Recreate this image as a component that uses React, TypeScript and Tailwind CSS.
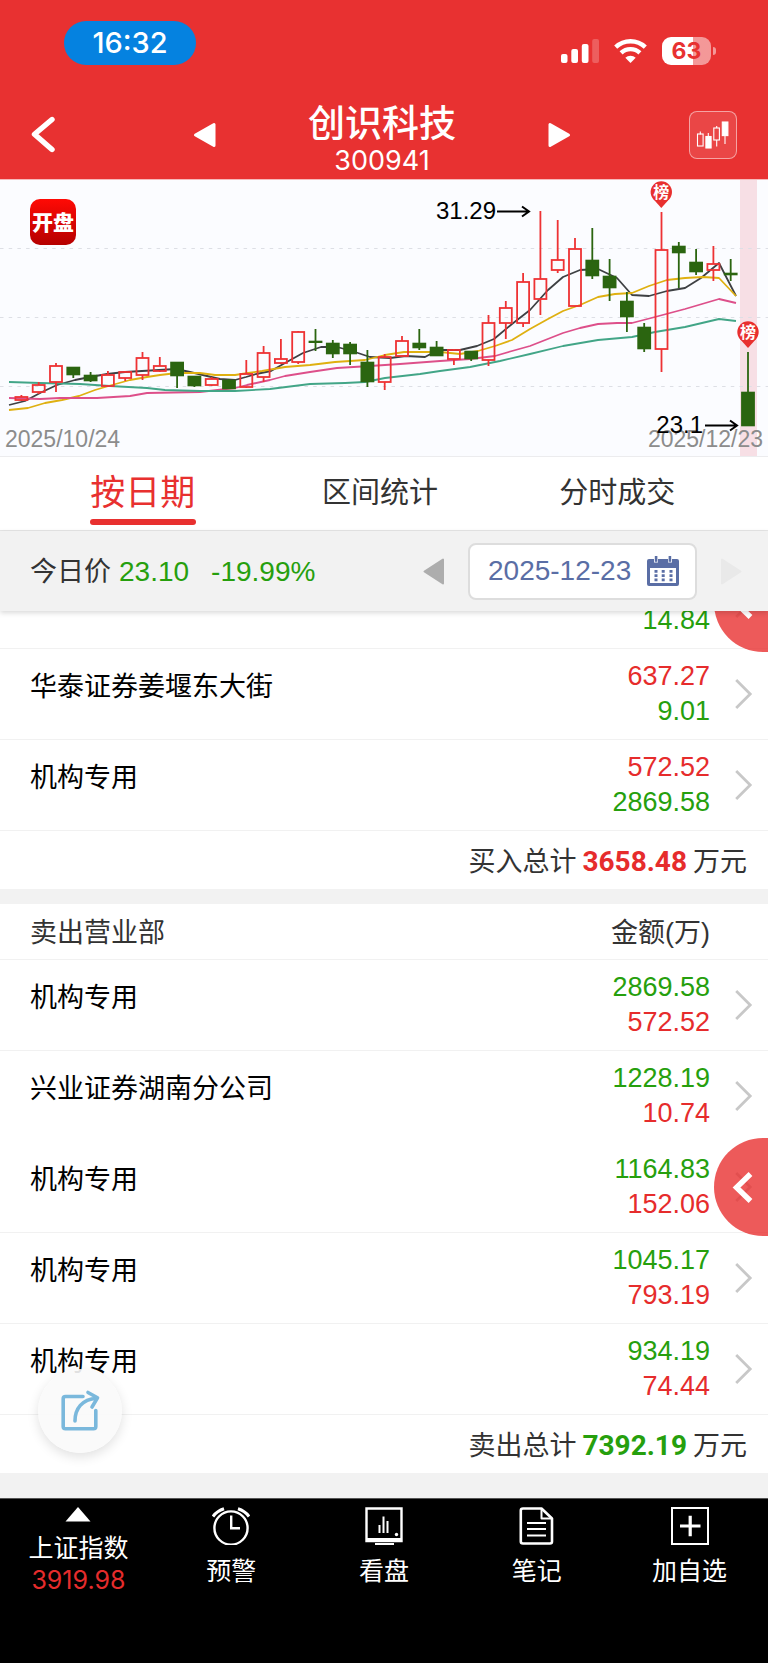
import { useState } from "react";

type Amount = { value: string; up: boolean };
type Row = { name: string; amounts: Amount[]; handle?: boolean; noLine?: boolean };

// [high, body top, body bottom, low, rising]
const candles: [number, number, number, number, boolean][] = [
  [215, 217, 220, 221, true],
  [202, 205, 212, 214, true],
  [183, 186, 202, 212, true],
  [187, 187, 195, 198, false],
  [192, 195, 201, 202, false],
  [191, 195, 206, 207, true],
  [191, 192, 198, 201, true],
  [172, 178, 195, 200, true],
  [177, 186, 191, 192, true],
  [182, 182, 196, 208, false],
  [196, 196, 206, 207, false],
  [197, 199, 205, 206, true],
  [199, 200, 209, 209, false],
  [180, 194, 207, 208, true],
  [166, 173, 197, 202, true],
  [159, 179, 183, 184, true],
  [151, 152, 182, 184, true],
  [149, 161, 162, 171, false],
  [160, 163, 174, 178, false],
  [162, 164, 174, 185, false],
  [170, 182, 202, 207, false],
  [174, 177, 202, 210, true],
  [156, 161, 176, 177, true],
  [149, 163, 168, 170, false],
  [161, 167, 176, 176, false],
  [169, 170, 179, 185, true],
  [171, 171, 179, 181, false],
  [135, 143, 180, 186, true],
  [121, 128, 143, 159, true],
  [93, 102, 143, 147, true],
  [31, 99, 119, 135, true],
  [40, 80, 90, 93, true],
  [58, 69, 126, 127, true],
  [48, 80, 96, 99, false],
  [79, 96, 108, 121, false],
  [112, 121, 137, 152, false],
  [143, 147, 169, 172, false],
  [32, 70, 169, 192, true],
  [62, 66, 73, 108, false],
  [69, 82, 92, 95, false],
  [66, 84, 90, 101, true],
  [79, 93, 95, 101, false],
  [172, 212, 246, 246, false],
];

const averages = [
  {
    color: "#3e4043",
    points:
      "9,225 25,221 42,212 57,205 75,200 90,197 107,194 125,192 142,191 159,190 176,189 190,192 207,196 220,199 235,200 246,197 256,194 271,191 285,183 303,173 321,167 337,167 352,171 370,177 390,178 406,176 425,177 438,170 460,170 477,166 494,159 512,144 530,130 548,110 563,97 580,90 598,89 617,98 632,115 649,116 667,111 685,108 701,98 719,83 736,116",
  },
  {
    color: "#dfb011",
    points:
      "9,230 28,228 45,223 62,220 79,216 95,210 112,205 130,200 147,197 160,195 177,193 200,193 215,195 235,195 248,193 262,191 285,187 310,185 335,182 365,180 385,175 404,172 440,172 460,174 478,171 495,166 512,160 530,149 548,139 563,131 580,125 598,117 615,114 632,113 649,106 667,100 685,98 703,97 719,98 736,116",
  },
  {
    color: "#dd4f8a",
    points:
      "9,218 40,219 60,218 97,218 130,216 147,213 200,212 235,208 247,205 270,200 285,196 310,192 337,188 370,186 400,184 440,181 470,179 495,176 512,171 530,166 563,153 580,148 598,144 617,143 632,143 655,137 685,129 702,124 719,119 736,123",
  },
  {
    color: "#42a587",
    points:
      "9,202 40,203 80,204 110,206 147,208 165,210 200,211 235,211 270,209 310,204 345,203 365,202 385,198 420,194 440,191 470,187 500,181 530,174 563,166 598,160 632,157 655,152 685,147 719,139 736,141",
  },
];

const buyRows: Row[] = [
  { name: "", amounts: [{ value: "\u00a0", up: true }, { value: "14.84", up: false }], handle: true },
  { name: "华泰证券姜堰东大街", amounts: [{ value: "637.27", up: true }, { value: "9.01", up: false }] },
  { name: "机构专用", amounts: [{ value: "572.52", up: true }, { value: "2869.58", up: false }] },
];

const sellRows: Row[] = [
  { name: "机构专用", amounts: [{ value: "2869.58", up: false }, { value: "572.52", up: true }] },
  { name: "兴业证券湖南分公司", amounts: [{ value: "1228.19", up: false }, { value: "10.74", up: true }], noLine: true },
  { name: "机构专用", amounts: [{ value: "1164.83", up: false }, { value: "152.06", up: true }], handle: true },
  { name: "机构专用", amounts: [{ value: "1045.17", up: false }, { value: "793.19", up: true }] },
  { name: "机构专用", amounts: [{ value: "934.19", up: false }, { value: "74.44", up: true }] },
];

const tabs = ["按日期", "区间统计", "分时成交"];

function StatusIcons() {
  return (
    <div className="flex items-end gap-[15px] text-white">
      <svg width="38" height="28" viewBox="0 0 38 28" fill="currentColor">
        <rect x="0" y="17" width="6.5" height="9" rx="2" />
        <rect x="10.3" y="12" width="6.7" height="14" rx="2" />
        <rect x="20.8" y="7" width="6.7" height="19" rx="2" />
        <rect x="31.2" y="2" width="6.8" height="24" rx="2" opacity="0.22" />
      </svg>
      <svg width="33" height="28" viewBox="0 0 33 28" fill="none" stroke="currentColor" strokeWidth="4.4">
        <path d="M1.7 10.2a21.4 21.4 0 0 1 29.6 0" />
        <path d="M7.1 15.9a13.6 13.6 0 0 1 18.8 0" />
        <path d="M16.5 26l-5.2-5.2a7.5 7.5 0 0 1 10.4 0z" fill="currentColor" stroke="none" />
      </svg>
      <div className="flex items-center gap-0.5">
        <div className="flex h-7 w-[49px] items-center justify-center rounded-[9px] bg-linear-to-r from-white from-63% to-white/50 to-63% font-['Inter',sans-serif] text-[23px] font-bold text-[#e83131]">
          63
        </div>
        <div className="h-2 w-[3px] rounded-r-full bg-white/50" />
      </div>
    </div>
  );
}

function Header() {
  return (
    <header className="bg-[#e83131] text-white">
      <div className="flex h-[65px] items-end justify-between pr-[52px] pl-16">
        <div className="flex h-11 w-[132px] items-center justify-center rounded-full bg-[#0582e0] font-['Inter',sans-serif] text-[29px] font-medium">
          16:32
        </div>
        <StatusIcons />
      </div>
      <div className="mt-[26px] flex h-[88px] items-center gap-[92px] pr-[31px] pl-[27px]">
        <div className="flex flex-1 items-center justify-between">
          <button aria-label="返回">
            <svg width="30" height="38" viewBox="0 0 30 38" fill="none" stroke="currentColor" strokeWidth="5.4" strokeLinecap="round" strokeLinejoin="round">
              <path d="M25 3.5L7.5 18.3L25 33.5" />
            </svg>
          </button>
          <button aria-label="上一只">
            <svg width="23" height="26" viewBox="0 0 23 26" fill="currentColor" stroke="currentColor" strokeWidth="3" strokeLinejoin="round">
              <path d="M21 2.5v21L2.5 13z" />
            </svg>
          </button>
        </div>
        <div className="pt-3 text-center">
          <h1 className="text-[37px] leading-10 font-medium">创识科技</h1>
          <p className="font-['Inter',sans-serif] text-[27px] leading-8">300941</p>
        </div>
        <div className="flex flex-1 items-center justify-between">
          <button aria-label="下一只">
            <svg width="23" height="26" viewBox="0 0 23 26" fill="currentColor" stroke="currentColor" strokeWidth="3" strokeLinejoin="round">
              <path d="M2 2.5v21L20.5 13z" />
            </svg>
          </button>
          <button aria-label="K线" className="rounded-lg border border-white/50 bg-white/10">
            <svg width="46" height="46" viewBox="0 0 46 46" fill="none" stroke="currentColor" strokeWidth="1.1">
              <path d="M10.3 19.5v3M18.3 21v4M26.7 14v2M26.7 28v6.5M35 24v8" />
              <rect x="7.5" y="22" width="5.6" height="12" />
              <rect x="15.9" y="24.5" width="5.2" height="11.5" fill="currentColor" />
              <rect x="23.8" y="16" width="5.6" height="12" />
              <rect x="32.3" y="10" width="5.6" height="13.6" fill="currentColor" />
            </svg>
          </button>
        </div>
      </div>
    </header>
  );
}

function Pin({ x, y }: { x: number; y: number }) {
  return (
    <g>
      <circle cx={x} cy={y} r="10.7" fill="#e8302f" />
      <path d={`M${x - 8.5} ${y + 6.5}L${x} ${y + 16}L${x + 8.5} ${y + 6.5}z`} fill="#e8302f" />
      <text x={x} y={y + 6} textAnchor="middle" fontSize="16" fontWeight="700" fill="#fff">
        榜
      </text>
    </g>
  );
}

function Chart() {
  return (
    <svg viewBox="0 0 768 277" className="block w-full border-t border-[#f6b9ba] bg-[#fbfcff]">
      <defs>
        <linearGradient id="badge" x1="0" y1="0" x2="0" y2="1">
          <stop offset="0" stopColor="#ff0a05" />
          <stop offset="1" stopColor="#b50000" />
        </linearGradient>
      </defs>
      <rect x="740" y="0" width="17" height="276" fill="#f7dfe5" />
      {[68.5, 137.5, 206.5].map((y) => (
        <path key={y} d={`M0 ${y}H768`} stroke="#dddfe5" strokeDasharray="3.5 5.2" />
      ))}
      <path d="M0 276.5H768" stroke="#ececee" />
      {averages.map((a) => (
        <polyline key={a.color} points={a.points} fill="none" stroke={a.color} strokeWidth="1.8" strokeLinejoin="round" />
      ))}
      {candles.map(([high, top, bottom, low, rising], i) => {
        const x = 21.4 + i * 17.3;
        const color = rising ? "#ee3234" : "#2b6510";
        const inset = rising ? 0 : 0.6;
        return (
          <g key={i} stroke={color} strokeWidth="1.8">
            <path d={`M${x} ${high}V${top}M${x} ${bottom}V${low}`} />
            <rect
              x={x - 6}
              y={top + inset}
              width="12"
              height={Math.max(bottom - top - inset * 2, 0.5)}
              fill={rising ? "none" : color}
            />
          </g>
        );
      })}
      <Pin x={661.3} y={12} />
      <Pin x={748} y={152} />
      <rect x="30" y="19" width="46" height="46" rx="10" fill="url(#badge)" />
      <text x="53" y="50" textAnchor="middle" fontSize="21" fontWeight="900" fill="#fff">
        开盘
      </text>
      <text x="5" y="267" fontSize="23" fill="#8c8c8c">
        2025/10/24
      </text>
      <text x="763" y="267" textAnchor="end" fontSize="23" fill="#8c8c8c">
        2025/12/23
      </text>
      <text x="496" y="39" textAnchor="end" fontSize="24">
        31.29
      </text>
      <text x="703" y="253" textAnchor="end" fontSize="24">
        23.1
      </text>
      <g fill="none" stroke="#000" strokeWidth="2">
        <path d="M497 31.5H529M522 26.5L529 31.5L522 36.5" />
        <path d="M705 245.5H737M730 240.5L737 245.5L730 250.5" />
      </g>
    </svg>
  );
}

function DateBar() {
  return (
    <div className="relative z-20 flex h-20 items-center justify-between bg-[#f2f2f2] pr-[26px] pl-[30px] shadow-[0_2px_5px_rgba(0,0,0,0.15)]">
      <p className="flex items-center gap-2 pt-0.5 text-[27px] whitespace-nowrap text-[#333]">
        今日价
        <span className="text-[28px] text-[#269f0d]">23.10</span>
        <span className="ml-3.5 text-[28px] text-[#269f0d]">-19.99%</span>
      </p>
      <div className="flex items-center gap-6">
        <button aria-label="前一天" className="text-[#adadad]">
          <svg width="21" height="27" viewBox="0 0 21 27" fill="currentColor" stroke="currentColor" strokeWidth="2" strokeLinejoin="round">
            <path d="M20 1.5v24L1.5 13.5z" />
          </svg>
        </button>
        <button className="flex h-[57px] w-[229px] items-center justify-between rounded-lg border-2 border-[#dddddd] bg-white pr-4 pl-[18px] text-[28px] text-[#5a6ea5]">
          2025-12-23
          <svg width="32" height="30" viewBox="0 0 32 30" fill="currentColor">
            <path fillRule="evenodd" d="M2 3H7V6.5H11V3H21V6.5H25V3H30A2 2 0 0 1 32 5V28A2 2 0 0 1 30 30H2A2 2 0 0 1 0 28V5A2 2 0 0 1 2 3zM3 12V27H29V12z" />
            <rect x="7.8" y="0" width="2.6" height="5.8" />
            <rect x="21.6" y="0" width="2.6" height="5.8" />
            <path d="M9 14V26M16.2 14V26M24 14V26" stroke="currentColor" strokeWidth="3" strokeDasharray="2.7 1.6" />
          </svg>
        </button>
        <button aria-label="后一天" disabled className="text-[#e9e9e9]">
          <svg width="21" height="27" viewBox="0 0 21 27" fill="currentColor" stroke="currentColor" strokeWidth="2" strokeLinejoin="round">
            <path d="M1 1.5v24L19.5 13.5z" />
          </svg>
        </button>
      </div>
    </div>
  );
}

function DealRow({ row }: { row: Row }) {
  const line = row.noLine ? "border-b border-white" : "border-b border-[#f1f1f1]";
  return (
    <tr>
      <td className={`${line} h-[91px] pt-5 pl-[30px] align-top text-[27px] leading-9 text-black`}>{row.name}</td>
      <td className={`${line} text-right text-[27px] leading-[35px]`}>
        {row.amounts.map((a) => (
          <div key={a.value} className={a.up ? "text-[#e62c2c]" : "text-[#269f0d]"}>
            {a.value}
          </div>
        ))}
      </td>
      <td className={`${line} relative w-[58px] pl-6`}>
        <svg width="20" height="32" viewBox="0 0 20 32" fill="none" stroke="#c8c8c8" strokeWidth="2.8">
          <path d="M2.2 2L16.2 16L2.2 30" />
        </svg>
        {row.handle && (
          <button aria-label="展开" className="absolute -top-1 right-0 z-10 h-[98px] w-[54px] overflow-hidden rounded-l-[49px] bg-[#e83131]/80">
            <svg width="54" height="98" viewBox="0 0 54 98" fill="none" stroke="#fff" strokeWidth="5.4">
              <path d="M36.5 36L22.5 49.5L36.5 63" />
            </svg>
          </button>
        )}
      </td>
    </tr>
  );
}

function TotalRow({ label, value, up }: { label: string; value: string; up: boolean }) {
  return (
    <tr>
      <td colSpan={3} className="h-[58px] pt-1 pr-[21px] text-right text-[27px] text-[#333]">
        {label}
        <span className={`mx-1.5 font-['Roboto',sans-serif] text-[28px] font-bold ${up ? "text-[#e62c2c]" : "text-[#269f0d]"}`}>{value}</span>
        万元
      </td>
    </tr>
  );
}

const tableClass = "w-full border-separate border-spacing-0 bg-white";

function BottomNav() {
  const item = "flex flex-1 flex-col items-center";
  const label = "mt-2.5 text-[25px] leading-8";
  return (
    <nav className="flex h-[165px] border-t border-[#555] bg-black px-0.5 pt-2 text-white">
      <button className={item}>
        <svg width="26" height="15" viewBox="0 0 26 15" fill="currentColor">
          <path d="M13 0L25.5 14.5H0.5z" />
        </svg>
        <span className={label}>上证指数</span>
        <span className="font-['Inter',sans-serif] text-[25px] leading-8 text-[#e62c2c]">3919.98</span>
      </button>
      <button className={item}>
        <svg width="38" height="38" viewBox="0 0 38 38" fill="none" stroke="currentColor" strokeWidth="2.4">
          <circle cx="19" cy="21" r="16.6" />
          <path d="M19.2 8.5V21.2H28" />
          <path d="M1 9.5Q5 4 12 1.8M37 9.5Q33 4 26 1.8" strokeWidth="3" />
        </svg>
        <span className={label}>预警</span>
      </button>
      <button className={item}>
        <svg width="38" height="38" viewBox="0 0 38 38" fill="none" stroke="currentColor" strokeWidth="2.4">
          <path d="M1.5 1.5H36.5V34H1.5z" />
          <path d="M1.5 32.5H36.5" strokeWidth="3" />
          <path d="M10 37H29" strokeWidth="2" />
          <path d="M14.5 18V26M18.500 9.500V26M22.500 14V26" strokeWidth="2" />
          <circle cx="31.5" cy="27.5" r="1.7" fill="currentColor" stroke="none" />
        </svg>
        <span className={label}>看盘</span>
      </button>
      <button className={item}>
        <svg width="35" height="38" viewBox="0 0 35 38" fill="none" stroke="currentColor" strokeWidth="2.6" strokeLinejoin="round">
          <path d="M4 1.5H22.5L33 11.5V34.5Q33 36.5 31 36.5H4Q1.8 36.5 1.8 34.5V3.5Q1.8 1.5 4 1.5z" />
          <path d="M22.5 2V11.5H32.5" strokeWidth="2" />
          <path d="M8 16H27M8 22H27M8 28.5H27" strokeWidth="2" />
        </svg>
        <span className={label}>笔记</span>
      </button>
      <button className={item}>
        <svg width="38" height="38" viewBox="0 0 38 38" fill="none" stroke="currentColor">
          <rect x="1" y="1" width="36" height="36" strokeWidth="2" />
          <path d="M9 19H29.5M19.2 8.7V29.3" strokeWidth="3.2" />
        </svg>
        <span className={label}>加自选</span>
      </button>
    </nav>
  );
}

export default function App() {
  const [active, setActive] = useState(0);

  return (
    <div className="flex min-h-screen flex-col bg-[#f2f2f2] font-['Liberation_Sans','Noto_Sans_CJK_SC',sans-serif]">
      <Header />
      <Chart />

      <div className="flex h-[74px] border-b border-[#e6e6e6] bg-white pr-8 pl-6">
        {tabs.map((t, i) => (
          <button
            key={t}
            onClick={() => setActive(i)}
            className={`flex flex-1 flex-col items-center pt-[13px] ${i === active ? "text-[35px] text-[#e8302f]" : "text-[29px] text-[#333]"}`}
          >
            <span className="leading-[46px]">{t}</span>
            {i === active && <span className="mt-[3px] h-1.5 w-[106px] rounded-full bg-[#e8302f]" />}
          </button>
        ))}
      </div>
      <DateBar />

      <main className="flex-1">
        {/* list is scrolled part of the way into its first row */}
        <section className="overflow-hidden">
          <table className={`${tableClass} -mt-[53px]`}>
            <tbody>
              {buyRows.map((row, i) => (
                <DealRow key={i} row={row} />
              ))}
            </tbody>
            <tfoot>
              <TotalRow label="买入总计" value="3658.48" up />
            </tfoot>
          </table>
        </section>

        <section className="relative mt-[15px] mb-[25px]">
          <table className={tableClass}>
            <thead>
              <tr className="text-[27px] text-[#333]">
                <th className="h-14 border-b border-[#f1f1f1] pt-1 pl-[30px] text-left font-normal">卖出营业部</th>
                <th className="border-b border-[#f1f1f1] pt-1 text-right font-normal">金额(万)</th>
                <th className="border-b border-[#f1f1f1]" />
              </tr>
            </thead>
            <tbody>
              {sellRows.map((row, i) => (
                <DealRow key={i} row={row} />
              ))}
            </tbody>
            <tfoot>
              <TotalRow label="卖出总计" value="7392.19" up={false} />
            </tfoot>
          </table>
          <button
            aria-label="分享"
            className="absolute bottom-5 left-[38px] z-10 flex size-[84px] items-center justify-center rounded-full bg-[#fafafa]/90 shadow-[0_4px_12px_rgba(0,0,0,0.12)]"
          >
            <svg width="40" height="42" viewBox="0 0 40 42" fill="none" stroke="#7ab8dc" strokeWidth="3.6" strokeLinecap="round" strokeLinejoin="round">
              <path d="M23 6.5H5.5Q3.2 6.5 3.2 8.8V36.5Q3.2 38.8 5.5 38.8H33.5Q35.8 38.8 35.8 36.5V20.5" />
              <path d="M15 31C15 19 22 9 36.5 8.5" />
              <path d="M28 2.5L37.5 7.8L32 17" />
            </svg>
          </button>
        </section>
      </main>

      <BottomNav />
    </div>
  );
}
